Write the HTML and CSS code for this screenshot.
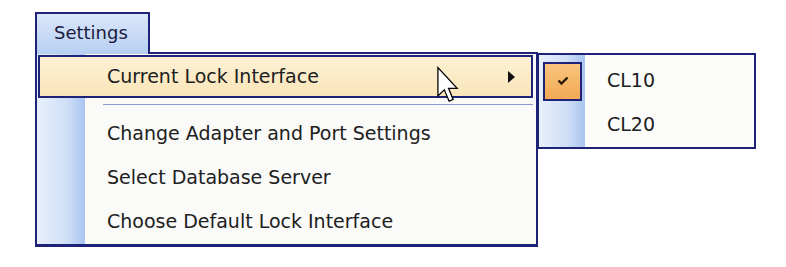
FILE: index.html
```html
<!DOCTYPE html>
<html lang="en">
<head>
    <meta charset="UTF-8">
    <meta name="viewport" content="width=device-width, initial-scale=1.0">
    <title>Settings Menu</title>
    <link rel="stylesheet" href="styles.css">
</head>
<body>
    <div class="screen">
        <div class="menubar">
            <div class="tab">Settings</div>
        </div>

        <div class="menus">
            <div class="menu">
                <div class="item active">
                    <span class="label">Current Lock Interface</span>
                    <span class="arrow"></span>
                </div>
                <div class="sep"></div>
                <div class="item"><span class="label">Change Adapter and Port Settings</span></div>
                <div class="item"><span class="label">Select Database Server</span></div>
                <div class="item"><span class="label">Choose Default Lock Interface</span></div>
            </div>

            <div class="submenu">
                <div class="subitem">
                    <span class="check">
                        <svg width="14" height="12" viewBox="0 0 14 12">
                            <path d="M2.5 5.5 L5.5 8.5 L11.5 2.5" fill="none" stroke="#2a1a08" stroke-width="2.4"/>
                        </svg>
                    </span>
                    <span class="label">CL10</span>
                </div>
                <div class="subitem">
                    <span class="check empty"></span>
                    <span class="label">CL20</span>
                </div>
            </div>
        </div>

        <!-- mouse pointer over the open item -->
        <svg class="cursor" width="22" height="38" viewBox="0 0 12 20">
            <path d="M0.5 0.5 L0.5 16 L4 12.6 L6.6 18.8 L8.8 17.9 L6.3 11.8 L11 11.8 Z"
                  fill="#fff" stroke="#000" stroke-width="0.7" stroke-linejoin="miter"/>
        </svg>
    </div>
</body>
</html>
```

FILE: styles.css
```css
body {
    margin: 0;
    background-color: #fff;
    font-family: "DejaVu Sans", sans-serif;
    font-size: 19px;
    color: #202020;
}

.screen {
    position: relative;
    width: 786px;
    height: 267px;
    padding: 12px 0 0 35px;
    box-sizing: border-box;
}

.menubar {
    display: flex;
    position: relative;
    z-index: 2;
}

.tab {
    width: 115px;
    height: 42px;
    box-sizing: border-box;
    padding: 8px 0 0 17px;
    margin-bottom: -2px;
    border: 2px solid #1e2378;
    border-bottom: none;
    background: linear-gradient(to bottom, #dbe7fa, #b7cff3);
    color: #1a1a40;
    font-size: 18px;
}

.menus {
    display: flex;
    align-items: flex-start;
}

.menu {
    width: 503px;
    height: 195px;
    box-sizing: border-box;
    border: 2px solid #1e2378;
    border-bottom-width: 3px;
    background: linear-gradient(to right, #e8f0fc 0, #cfdff7 30px, #a8c4f0 48px, #fafaf9 48px);
    display: flex;
    flex-direction: column;
}

.item {
    display: flex;
    align-items: center;
    height: 44px;
    padding-left: 70px;
    margin-right: 3px;
}

.item.active {
    height: 43px;
    box-sizing: border-box;
    margin: 1px 3px 0 1px;
    padding-left: 67px;
    padding-right: 16px;
    border: 2px solid #1e2378;
    background: linear-gradient(to bottom, #fdf1d4, #fae5b8);
}

.item .label {
    flex: 1;
    padding-bottom: 2px;
}

.arrow {
    width: 0;
    height: 0;
    border-top: 6px solid transparent;
    border-bottom: 6px solid transparent;
    border-left: 7px solid #111;
}

.sep {
    height: 1px;
    margin: 6px 3px 7px 66px;
    background-color: #8e94d8;
}

.submenu {
    width: 219px;
    height: 96px;
    margin: 1px 0 0 -1px;
    box-sizing: border-box;
    border: 2px solid #1e2378;
    padding-top: 4px;
    background: linear-gradient(to right, #e8f0fc 0, #cfdff7 28px, #a8c4f0 46px, #fcfcfb 46px);
    display: flex;
    flex-direction: column;
}

.subitem {
    display: flex;
    align-items: center;
    height: 44px;
}

.check {
    display: flex;
    align-items: center;
    justify-content: center;
    width: 39px;
    height: 39px;
    box-sizing: border-box;
    margin: 0 25px 0 4px;
    border: 2px solid #1e2378;
    background: linear-gradient(to bottom, #f9c57e, #f3aa55);
}

.check.empty {
    border: none;
    background: none;
}

.subitem .label {
    padding-bottom: 2px;
}

.cursor {
    position: absolute;
    left: 437px;
    top: 66px;
    z-index: 3;
}
```
